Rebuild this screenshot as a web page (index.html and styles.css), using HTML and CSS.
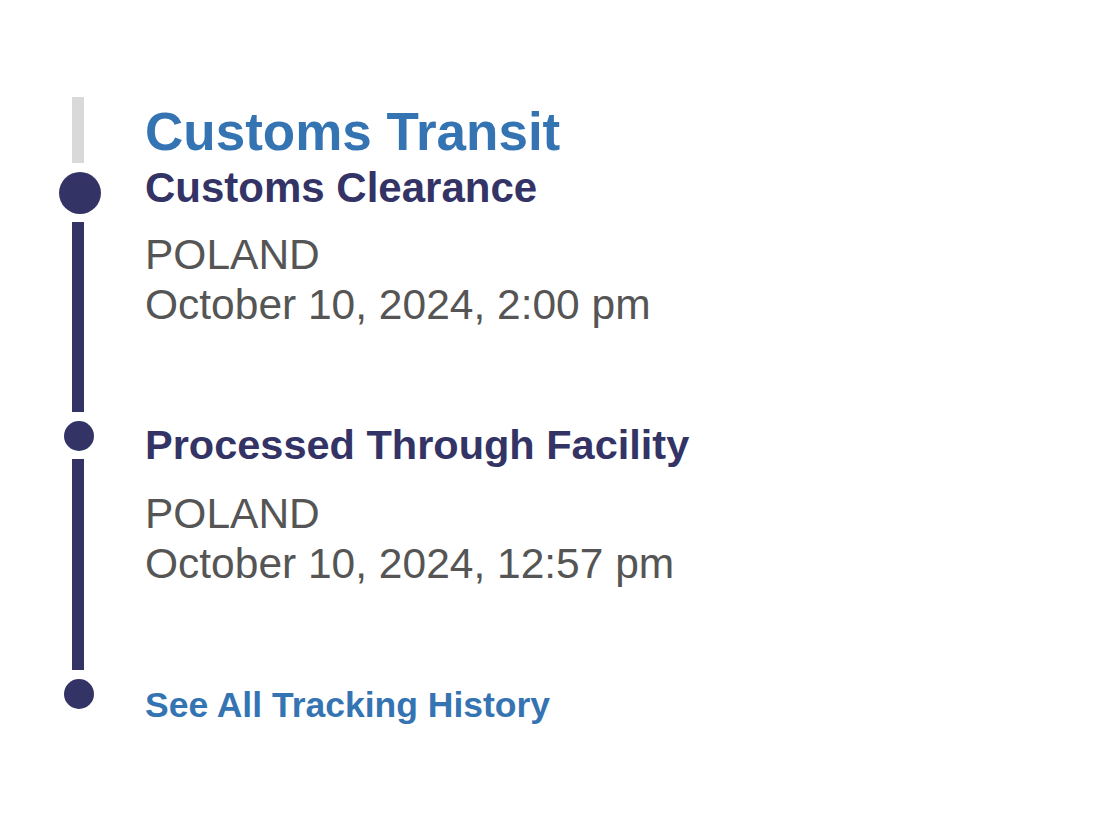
FILE: index.html
```html
<!DOCTYPE html>
<html lang="en">
<head>
<meta charset="utf-8">
<title>Tracking</title>
<link rel="stylesheet" href="styles.css">
</head>
<body>
<div class="timeline">
  <div class="row header">
    <div class="rail"><div class="bar"></div></div>
    <div class="content"><h1 class="stage">Customs Transit</h1></div>
  </div>
  <div class="row event first">
    <div class="rail"><div class="dot big"></div><div class="line"></div></div>
    <div class="content">
      <h2 class="title">Customs Clearance</h2>
      <p class="meta">POLAND<br>October 10, 2024, 2:00 pm</p>
    </div>
  </div>
  <div class="row event second">
    <div class="rail"><div class="dot"></div><div class="line"></div></div>
    <div class="content">
      <h2 class="title">Processed Through Facility</h2>
      <p class="meta">POLAND<br>October 10, 2024, 12:57 pm</p>
    </div>
  </div>
  <div class="row end">
    <div class="rail"><div class="dot"></div></div>
    <div class="content"><a class="history" href="#">See All Tracking History</a></div>
  </div>
</div>
</body>
</html>
```

FILE: styles.css
```css
html, body {
  margin: 0;
  padding: 0;
  background: #ffffff;
}
body {
  font-family: "Liberation Sans", Arial, Helvetica, sans-serif;
}
.timeline {
  padding: 97px 0 0 58px;
  display: flex;
  flex-direction: column;
}
.row {
  display: flex;
  gap: 45px;
}
.rail {
  width: 42px;
  flex: none;
  display: flex;
  flex-direction: column;
  align-items: center;
}
.bar {
  width: 12px;
  height: 66px;
  margin-bottom: 9px;
  margin-right: 2px;
  background: #d9d9d9;
}
.dot {
  width: 30px;
  height: 30px;
  border-radius: 50%;
  background: #333366;
  flex: none;
}
.dot.big {
  width: 42px;
  height: 42px;
  margin-left: 2px;
}
.line {
  flex: 1;
  width: 12px;
  margin: 8px 0 9px;
  margin-right: 2px;
  background: #333366;
}
.content {
  flex: 1;
}
.stage {
  margin: 0;
  padding-top: 9px;
  font-size: 53px;
  line-height: 52px;
  font-weight: 700;
  color: #3574b3;
}
.title {
  margin: 0;
  font-size: 42px;
  line-height: 32px;
  font-weight: 700;
  color: #333366;
}
.second .title {
  font-size: 41.5px;
}
.meta {
  margin: 26px 0 0;
  font-size: 42.5px;
  line-height: 50px;
  color: #555555;
}
.first .content { padding-bottom: 91px; }
.second .content { padding-top: 8px; padding-bottom: 90px; }
.second .meta { margin-top: 28px; }
.end .content { padding-top: 6px; padding-bottom: 20px; }
.history {
  display: block;
  font-size: 35.5px;
  line-height: 40px;
  font-weight: 700;
  color: #3574b3;
  text-decoration: none;
}
```
